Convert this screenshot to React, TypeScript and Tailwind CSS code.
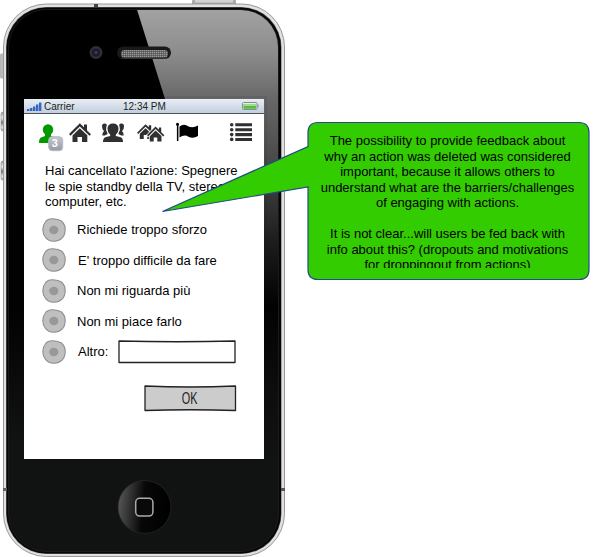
import React from "react";

const HOUSE =
  "M69 134 79.800 123.300 84 127.300V124.500h3v6l4 3.700-1.500 1.600L79.800 126.400 70.500 135.700zM72.500 135.500 79.800 128.300l7.500 7V142H82v-5h-4.500v5h-5z";

function PhoneArt() {
  return (
    <svg className="absolute inset-0" width="290" height="557" viewBox="0 0 290 557">
      <defs>
        <linearGradient id="glare" x1="0" y1="8" x2="0" y2="459" gradientUnits="userSpaceOnUse">
          <stop offset="0" stopColor="#a3a3a3" />
          <stop offset="0.1" stopColor="#8c8c8c" />
          <stop offset="0.2" stopColor="#686868" />
          <stop offset="0.38" stopColor="#404040" />
          <stop offset="0.52" stopColor="#1c1c1c" />
          <stop offset="0.66" stopColor="#020202" />
          <stop offset="0.85" stopColor="#0d0d0d" />
          <stop offset="1" stopColor="#111212" />
        </linearGradient>
        <linearGradient id="face" x1="0" y1="0" x2="0" y2="1">
          <stop offset="0" stopColor="#000" />
          <stop offset="0.55" stopColor="#020202" />
          <stop offset="0.8" stopColor="#111212" />
          <stop offset="1" stopColor="#111212" />
        </linearGradient>
        <linearGradient id="home" x1="0" y1="0.2" x2="1" y2="0.3">
          <stop offset="0" stopColor="#5a5a5a" />
          <stop offset="0.5" stopColor="#070707" />
          <stop offset="1" stopColor="#000" />
        </linearGradient>
        <linearGradient id="metal" x1="0" y1="0" x2="0" y2="1">
          <stop offset="0" stopColor="#999" />
          <stop offset="0.3" stopColor="#eee" />
          <stop offset="0.55" stopColor="#777" />
          <stop offset="0.8" stopColor="#eee" />
          <stop offset="1" stopColor="#999" />
        </linearGradient>
        <pattern id="mesh" width="2" height="2" patternUnits="userSpaceOnUse">
          <rect width="2" height="2" fill="#6c6c6c" />
          <rect width="1" height="1" fill="#999" />
          <rect x="1" y="1" width="1" height="1" fill="#555" />
        </pattern>
        <clipPath id="glass">
          <rect x="9" y="10" width="269" height="541" rx="37" />
        </clipPath>
      </defs>
      <rect x="192" y="0" width="44" height="6" rx="1" fill="#aaa" />
      <rect x="195" y="0" width="38" height="2.500" fill="#d2d2d2" />
      <rect x="0.5" y="54" width="4" height="24" rx="1" fill="#bbb" stroke="#999" strokeWidth="0.6" />
      <rect x="1" y="112" width="4" height="19" rx="2" fill="url(#metal)" stroke="#888" strokeWidth="0.6" />
      <rect x="1" y="161" width="4" height="19" rx="2" fill="url(#metal)" stroke="#888" strokeWidth="0.6" />
      <rect x="3.500" y="4" width="281" height="552.500" rx="43" fill="#e3e1df" stroke="#999" />
      <rect x="6" y="7" width="275.500" height="547" rx="40.500" fill="#666" />
      <rect x="6.500" y="7.500" width="274.500" height="546" rx="40" fill="#060606" />
      <rect x="94" y="4" width="4" height="3" fill="#444" />
      <rect x="3" y="488" width="4" height="3" fill="#665f5c" />
      <rect x="281" y="488" width="4" height="3" fill="#555" />
      <rect x="8.500" y="9.500" width="270" height="542" rx="38" fill="url(#face)" stroke="#222" strokeWidth="0.7" />
      <path clipPath="url(#glass)" d="M136.500 8H280V459H264V99H165Z" fill="url(#glare)" />
      <rect x="22" y="97" width="244" height="364" fill="none" stroke="#111" strokeWidth="1" opacity="0.15" />
      <circle cx="96" cy="52.500" r="6.500" fill="#303030" />
      <circle cx="96" cy="52.500" r="4" fill="#1f1b2c" />
      <circle cx="96" cy="52.500" r="1.500" fill="#4d2b9a" />
      <rect x="117" y="46.500" width="54" height="12.500" rx="6.200" fill="#191919" />
      <rect x="121" y="50" width="47" height="7.500" rx="3.500" fill="url(#mesh)" />
      <path d="M122 58H166" stroke="#484848" />
      <circle cx="144.500" cy="507" r="26.500" fill="url(#home)" stroke="#292929" strokeWidth="0.7" />
      <rect x="135.700" y="498.300" width="17.200" height="17.800" rx="4" fill="#090909" stroke="#aaa" strokeWidth="1.500" />
    </svg>
  );
}

function StatusBar() {
  return (
    <div className="flex h-[15px] items-center border-b border-[#4c535c] bg-linear-to-b from-[#e8eef5] to-[#c2cfdd] pl-[3px] pr-[5px] text-[10px] leading-[14px] text-[#222]">
      <svg width="15" height="9" viewBox="0 0 15 9" fill="#3464c5">
        <path d="M0 7h2.400v2H0zM3 6h2.400v3H3zM6 4.500h2.400V9H6zM9 2.500h2.400V9H9zM12 .5h2.400V9H12z" />
      </svg>
      <span className="ml-[2px] w-[79px] pt-px">Carrier</span>
      <span className="grow whitespace-nowrap pt-px">12:34 PM</span>
      <svg width="17" height="8" viewBox="0 0 17 8">
        <rect x=".5" y=".5" width="14.500" height="7" rx="1" fill="#e4f0e1" stroke="#858e98" />
        <rect x="1.500" y="2" width="12.500" height="4.800" fill="#59bd3e" />
        <path d="M1.500 2h12.500v2h-12.500z" fill="#9edd8b" />
        <path d="M15.500 2.500h1v3h-1z" fill="#858e98" />
      </svg>
    </div>
  );
}

function NavIcons() {
  return (
    <svg className="block" width="240" height="46" viewBox="24 114 240 46" fill="#303030">
      <g fill="#009900">
        <ellipse cx="48" cy="129.700" rx="5.200" ry="5.500" />
        <path d="M45 132h6v4l4 1.500q2.500 1 2.500 5.500H39q0-4.500 2-5.500l4-1.500z" />
      </g>
      <defs>
        <linearGradient id="badge" x1="0" y1="0" x2="0" y2="1">
          <stop offset="0" stopColor="#c5c8cf" />
          <stop offset="1" stopColor="#9499a3" />
        </linearGradient>
      </defs>
      <rect x="48.700" y="136.700" width="14" height="14" rx="3.500" fill="url(#badge)" stroke="#b9bcc3" />
      <text x="54.800" y="146.800" textAnchor="middle" fontSize="11" fontWeight="bold" fill="#fff">3</text>
      <path d={HOUSE} />
      <g>
        <path d="M107.500 129q0-5.500 5.500-5.500t5.500 5.500q0 3.800-2.700 5.700v1.300l5 1.300q2.200.9 2.200 4.700H103q0-3.800 2.200-4.700l5-1.300v-1.300q-2.700-1.900-2.700-5.700z" />
        <path id="companion" d="M102 126.200q0-2.700 2.500-2.700 1.800 0 2.400 1.400-1 2.200-.8 5l1.600 4-3 1.600H102.300q0-3.500 1.700-4.200-2-1.700-2-5.100z" />
        <use href="#companion" transform="matrix(-1 0 0 1 226 0)" />
      </g>
      <g transform="translate(82.500 26.800) scale(.79)">
        <path d={HOUSE} />
      </g>
      <g transform="translate(92.500 29.200) scale(.79)">
        <path d={HOUSE} stroke="#fff" strokeWidth="1.800" paintOrder="stroke" />
      </g>
      <g fill="#000">
        <circle cx="177.500" cy="124.300" r="1.500" />
        <path d="M176.900 125h1.500v16h-1.500zM179.500 126.500q4.500-3.500 9 0 4.500 2 9.500-1v10.500q-5 3-9.500.7-4-2.700-9 .8z" />
      </g>
      <g>
        <circle cx="231.700" cy="124.700" r="1.800" />
        <circle cx="231.700" cy="129.700" r="1.800" />
        <circle cx="231.700" cy="134.600" r="1.800" />
        <circle cx="231.700" cy="139.400" r="1.800" />
        <path d="M235.300 123.200H252v3.100h-16.700zM235.300 128.200H252v3.100h-16.700zM235.300 133.100H252v3.100h-16.700zM235.300 137.900H252v3.100h-16.700z" />
      </g>
    </svg>
  );
}

function Radio() {
  return (
    <svg className="shrink-0" width="24" height="24" viewBox="0 0 24 24">
      <path d="M4 3Q6.500.6 11 .8q5.500.3 8.500 2.200 3.700 3.500 3.700 8.500 0 5.500-3.200 8.700-3.500 3.300-8.500 3.100-5-.3-8-4Q.7 16 .8 11.500 1 6.500 4 3z" fill="#bfbfbf" stroke="#8f8f8f" strokeWidth="1.100" />
      <ellipse cx="11.800" cy="12" rx="4.600" ry="4.200" fill="#989898" />
    </svg>
  );
}

function Option({ label, gap, height }: { label: string; gap: string; height: string }) {
  return (
    <div className={`flex ${height} ${gap} items-center whitespace-nowrap text-[13px]`}>
      <Radio />
      <span className="pt-px">{label}</span>
    </div>
  );
}

function Callout() {
  const lines = [
    "The possibility to provide feedback about",
    "why an action was deleted was considered",
    "important, because it allows others to",
    "understand what are the barriers/challenges",
    "of engaging with actions.",
    "\u00a0",
    "It is not clear...will users be fed back with",
    "info about this? (dropouts and motivations",
    "for droppingout from actions)",
  ];
  return (
    <div className="absolute left-0 top-0 h-[285px] w-[595px]">
      <svg className="absolute inset-0" width="595" height="285" viewBox="0 0 595 285">
        <path d="M318 122.500H579Q589 122.500 589 132.500V269.500Q589 279.500 579 279.500H318Q308 279.500 308 269.500V187L162.500 211.500 308 146.500V132.500Q308 122.500 318 122.500Z" fill="#33cc00" stroke="#234a87" strokeWidth="1.200" />
      </svg>
      <div className="relative ml-[308px] mt-[133px] h-[135px] w-[279px] overflow-hidden text-center text-[13px] leading-[15.5px] text-black">
        {lines.map((line, i) => (
          <div key={i} className="whitespace-nowrap">{line}</div>
        ))}
      </div>
    </div>
  );
}

export default function App() {
  return (
    <main className="relative h-[557px] w-[595px] overflow-hidden bg-white font-['Liberation_Sans',Arial,sans-serif] text-black">
      <PhoneArt />
      <div className="relative pl-[24px] pt-[99px]">
        <section className="h-[360px] w-[240px] bg-white">
          <StatusBar />
          <NavIcons />
          <p className="ml-[21px] mt-[3px] whitespace-nowrap text-[13px] leading-[15.5px]">
            Hai cancellato l'azione: Spegnere<br />le spie standby della TV, stereo,<br />computer, etc.
          </p>
          <div className="ml-[18px] mt-[5px]">
            <Option label="Richiede troppo sforzo" gap="gap-[11px]" height="h-[30px]" />
            <Option label="E' troppo difficile da fare" gap="gap-[12px]" height="h-[31px]" />
            <Option label="Non mi riguarda più" gap="gap-[11px]" height="h-[30px]" />
            <Option label="Non mi piace farlo" gap="gap-[11px]" height="h-[31px]" />
            <div className="flex h-[30px] items-center text-[13px]">
              <Radio />
              <span className="ml-[12px] w-[39px]">Altro:</span>
              <svg width="120" height="26" viewBox="0 0 120 26">
                <path d="M2 2Q60 3.500 118 2V23.500H2z" fill="#fff" stroke="#222" strokeWidth="1.300" strokeLinejoin="round" />
              </svg>
            </div>
          </div>
          <button className="relative ml-[119px] mt-[17px] block h-[28px] w-[94px]">
            <svg className="absolute inset-0" width="94" height="28" viewBox="0 0 94 28">
              <path d="M2 2Q47 4 92.500 2V26.500Q47 25 2 26.500z" fill="#ccc" stroke="#222" strokeWidth="1.300" strokeLinejoin="round" />
            </svg>
            <span className="relative inline-block scale-x-[.68] pt-px text-[16px] leading-[28px] text-[#222]">OK</span>
          </button>
        </section>
      </div>
      <Callout />
    </main>
  );
}
